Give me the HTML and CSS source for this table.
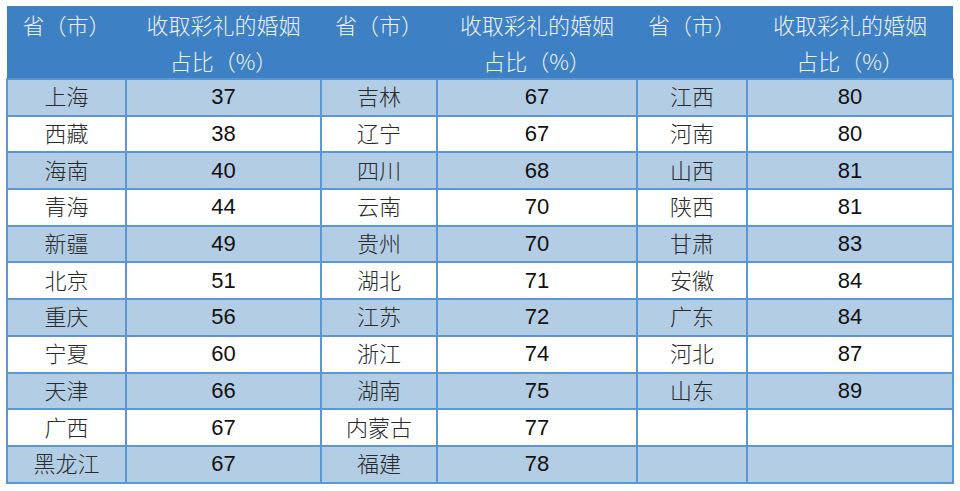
FILE: index.html
```html
<!DOCTYPE html>
<html lang="zh">
<head>
<meta charset="utf-8">
<link rel="stylesheet" href="styles.css">
</head>
<body>
<table class="tbl">
  <colgroup>
    <col class="c1"><col class="c2"><col class="c3"><col class="c4"><col class="c5"><col class="c6">
  </colgroup>
  <thead>
    <tr>
      <th>省（市）</th><th>收取彩礼的婚姻<br>占比（%）</th>
      <th>省（市）</th><th>收取彩礼的婚姻<br>占比（%）</th>
      <th>省（市）</th><th>收取彩礼的婚姻<br>占比（%）</th>
    </tr>
  </thead>
  <tbody>
    <tr class="odd"><td class="p">上海</td><td class="n">37</td><td class="p">吉林</td><td class="n">67</td><td class="p">江西</td><td class="n">80</td></tr>
    <tr><td class="p">西藏</td><td class="n">38</td><td class="p">辽宁</td><td class="n">67</td><td class="p">河南</td><td class="n">80</td></tr>
    <tr class="odd"><td class="p">海南</td><td class="n">40</td><td class="p">四川</td><td class="n">68</td><td class="p">山西</td><td class="n">81</td></tr>
    <tr><td class="p">青海</td><td class="n">44</td><td class="p">云南</td><td class="n">70</td><td class="p">陕西</td><td class="n">81</td></tr>
    <tr class="odd"><td class="p">新疆</td><td class="n">49</td><td class="p">贵州</td><td class="n">70</td><td class="p">甘肃</td><td class="n">83</td></tr>
    <tr><td class="p">北京</td><td class="n">51</td><td class="p">湖北</td><td class="n">71</td><td class="p">安徽</td><td class="n">84</td></tr>
    <tr class="odd"><td class="p">重庆</td><td class="n">56</td><td class="p">江苏</td><td class="n">72</td><td class="p">广东</td><td class="n">84</td></tr>
    <tr><td class="p">宁夏</td><td class="n">60</td><td class="p">浙江</td><td class="n">74</td><td class="p">河北</td><td class="n">87</td></tr>
    <tr class="odd"><td class="p">天津</td><td class="n">66</td><td class="p">湖南</td><td class="n">75</td><td class="p">山东</td><td class="n">89</td></tr>
    <tr><td class="p">广西</td><td class="n">67</td><td class="p">内蒙古</td><td class="n">77</td><td class="p"></td><td class="n"></td></tr>
    <tr class="odd"><td class="p">黑龙江</td><td class="n">67</td><td class="p">福建</td><td class="n">78</td><td class="p"></td><td class="n"></td></tr>
  </tbody>
</table>
</body>
</html>
```

FILE: styles.css
```css
html, body {
  margin: 0;
  padding: 0;
  background: #ffffff;
}
body {
  padding: 6px 0 0 6px;
}
.tbl {
  border-collapse: collapse;
  table-layout: fixed;
  width: 946px;
}
.c1 { width: 119px; }
.c2 { width: 195px; }
.c3 { width: 116px; }
.c4 { width: 200px; }
.c5 { width: 110px; }
.c6 { width: 206px; }

.tbl thead th {
  background: #3d80c3;
  color: #eef3f9;
  font-family: "Noto Sans CJK SC", "Liberation Sans", sans-serif;
  font-weight: 300;
  font-size: 22px;
  line-height: 36px;
  height: 72px;
  padding: 0;
  text-align: center;
  vertical-align: top;
  border: none;
  border-bottom: 2px solid #5b97d3;
}
.tbl tbody td {
  height: 34.7px;
  padding: 0;
  border: 2px solid #5b97d3;
  text-align: center;
  vertical-align: middle;
  background: #ffffff;
  color: #1a1a1a;
}
.tbl tbody tr.odd td {
  background: #b3cde5;
}
.tbl tbody td.p {
  font-family: "Noto Sans CJK SC", serif;
  font-weight: 300;
  font-size: 22px;
  line-height: 30px;
  color: #2a2a2a;
  height: 30.7px;
  padding-bottom: 4px;
}
.tbl tbody td.n {
  font-family: "Liberation Sans", Arial, sans-serif;
  font-size: 22px;
  line-height: 30px;
  color: #111111;
}
```
